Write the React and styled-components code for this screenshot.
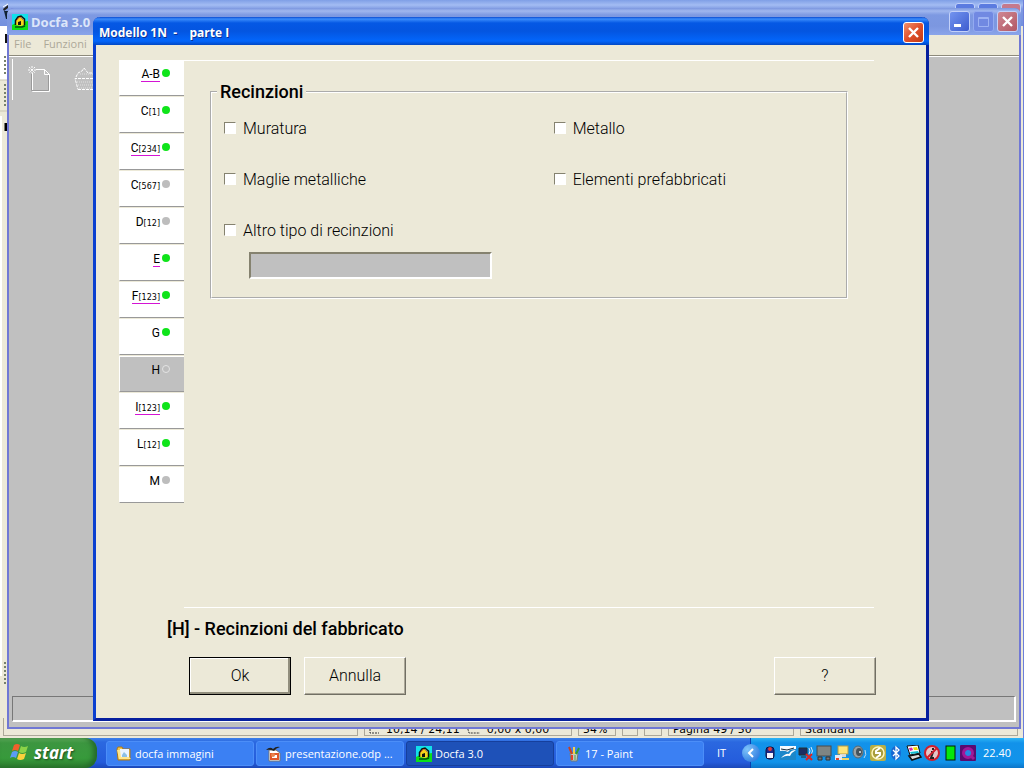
import { useState } from "react";
import styled, { createGlobalStyle } from "styled-components";

const tabs = [
    { id: "A-B", letter: "A-B", done: true, link: true },
    { id: "C1", letter: "C", sub: "[1]", done: true },
    { id: "C234", letter: "C", sub: "[234]", done: true, link: true },
    { id: "C567", letter: "C", sub: "[567]" },
    { id: "D12", letter: "D", sub: "[12]" },
    { id: "E", letter: "E", done: true, link: true },
    { id: "F123", letter: "F", sub: "[123]", done: true, link: true },
    { id: "G", letter: "G", done: true },
    { id: "H", letter: "H" },
    { id: "I123", letter: "I", sub: "[123]", done: true, link: true },
    { id: "L12", letter: "L", sub: "[12]", done: true },
    { id: "M", letter: "M" },
];

export default function App() {
    const [current, setCurrent] = useState("H");

    return (
        <Desktop>
            <GlobalStyle />
            <Workspace>
                <Office />
                <Docfa />
                <Dialog>
                    <DialogTitle>
                        <span>Modello 1N &nbsp;- &nbsp;&nbsp; parte I</span>
                        <CloseButton type="button" aria-label="Chiudi"><Cross /></CloseButton>
                    </DialogTitle>
                    <DialogForm onSubmit={(e) => e.preventDefault()}>
                        <Upper>
                            <Tabs>
                                {tabs.map((t) => (
                                    <Tab key={t.id} type="button" $active={t.id === current} onClick={() => setCurrent(t.id)}>
                                        <TabText $link={t.link}>
                                            {t.letter}{t.sub && <small>{t.sub}</small>}
                                        </TabText>
                                        <Dot $done={t.done} $active={t.id === current} />
                                    </Tab>
                                ))}
                            </Tabs>
                            <Panel>
                                <Group>
                                    <legend>Recinzioni</legend>
                                    <Options>
                                        <Option><Check type="checkbox" />Muratura</Option>
                                        <Option><Check type="checkbox" />Metallo</Option>
                                        <Option><Check type="checkbox" />Maglie metalliche</Option>
                                        <Option><Check type="checkbox" />Elementi prefabbricati</Option>
                                        <Option><Check type="checkbox" />Altro tipo di recinzioni</Option>
                                    </Options>
                                    <OtherText type="text" aria-label="Altro tipo di recinzioni" disabled />
                                </Group>
                            </Panel>
                        </Upper>
                        <Heading>[H] - Recinzioni del fabbricato</Heading>
                        <Buttons>
                            <FormButton type="submit" $default>Ok</FormButton>
                            <FormButton type="button">Annulla</FormButton>
                            <Spacer />
                            <FormButton type="button">?</FormButton>
                        </Buttons>
                    </DialogForm>
                </Dialog>
            </Workspace>
            <Taskbar />
        </Desktop>
    );
}

function Office() {
    return (
        <OfficeWindow>
            <OfficeTitle>
                <svg width="8" height="26" viewBox="0 0 8 26">
                    <path d="M3 9 L8 5 V8 L4 11z" fill="#222" />
                    <path d="M4 11 H8 V19 H6z" fill="#123" />
                    <path d="M3 7 L8 4" stroke="#fff" />
                </svg>
                <OfficeCorner><i /><i /><b /></OfficeCorner>
            </OfficeTitle>
            <OfficeEdge>
                <svg width="7" height="660" viewBox="0 0 7 660">
                    <rect width="7" height="54" fill="#fff" />
                    <path d="M6 8V17" stroke="#111" strokeWidth="2" />
                    <path d="M5 30V50M5 58V80M5 636V660" stroke="#77806c" strokeWidth="2" strokeDasharray="2 2" />
                    <path d="M0 54H7M0 85H7" stroke="#c9c5b2" />
                    <path d="M1 90V650" stroke="#fff" strokeWidth="2" />
                    <path d="M6 97V105" stroke="#000" strokeWidth="3" />
                </svg>
            </OfficeEdge>
            <OfficeStatus>
                <StatusCell $width={355} />
                <StatusCell $width={208}>
                    <svg width="11" height="10" viewBox="0 0 11 10"><path d="M1 1V8H10" fill="none" stroke="#333" strokeDasharray="2 1" /></svg>
                    <span>10,14 / 24,11</span>
                    <svg width="15" height="10" viewBox="0 0 15 10"><path d="M1 1L3 8H14" fill="none" stroke="#333" strokeDasharray="2 1" /></svg>
                    <span>0,00 x 0,00</span>
                </StatusCell>
                <StatusCell $width={38}>54%</StatusCell>
                <StatusCell $width={16} />
                <StatusCell $width={18} />
                <StatusCell $width={126}>Pagina 49 / 50</StatusCell>
                <StatusCell $grow>Standard</StatusCell>
            </OfficeStatus>
        </OfficeWindow>
    );
}

function Docfa() {
    return (
        <DocfaWindow>
            <DocfaTitle>
                <HouseIcon />
                <strong>Docfa 3.0</strong>
                <CaptionButton type="button" aria-label="Riduci a icona">
                    <svg width="19" height="19" viewBox="0 0 19 19"><path d="M4 13.5H11" stroke="#fff" strokeWidth="3" /></svg>
                </CaptionButton>
                <CaptionButton type="button" aria-label="Ingrandisci" $dim>
                    <svg width="19" height="19" viewBox="0 0 19 19"><path d="M4.500 5.500H14.500V14.500H4.500zM4.500 6.500H14.500" fill="none" stroke="#9db2f3" /></svg>
                </CaptionButton>
                <CaptionButton type="button" aria-label="Chiudi" $red><Cross /></CaptionButton>
            </DocfaTitle>
            <Menu>
                <a href="#file">File</a>
                <a href="#funzioni">Funzioni</a>
            </Menu>
            <DocfaBody>
                <Toolbar>
                    <ToolButton type="button" aria-label="Nuovo" disabled>
                        <svg width="26" height="30" viewBox="0 0 26 30" fill="none">
                            <path d="M6.500 9V27.500H23.500V10.500L18.500 5.500H10M18.500 5.500V10.500H23.500" stroke="#fff" />
                            <path d="M5.500 10V26.500H22.500V11" stroke="#9a9a9a" />
                            <path d="M6 2V9M2 6H10M3 3L9 9M9 3L3 9" stroke="#fff" strokeDasharray="2 1" />
                        </svg>
                    </ToolButton>
                    <ToolButton type="button" aria-label="Apri" disabled>
                        <svg width="26" height="30" viewBox="0 0 26 30" fill="none">
                            <path d="M6 25.500H24V14.500H3L6 25.500M4 13L6 9L10 7L12 4L16 9H24" stroke="#fff" strokeDasharray="3 1" />
                            <path d="M7 24H24M5 18H23M6 21H24M8 10H22" stroke="#e0e0e0" strokeDasharray="1 1" />
                        </svg>
                    </ToolButton>
                </Toolbar>
                <DocfaStatus />
            </DocfaBody>
        </DocfaWindow>
    );
}

function Taskbar() {
    return (
        <Bar>
            <Start type="button">
                <svg width="20" height="20" viewBox="0 0 20 20">
                    <path d="M4 3Q7 1 10 3L8 9Q5 7 2 9z" fill="#f0602c" />
                    <path d="M11 4Q14 6 18 4L16 10Q12 12 9 10z" fill="#8bd348" />
                    <path d="M2 10Q5 8 8 10L6 16Q3 14 0 16z" fill="#5c9cf5" />
                    <path d="M9 11Q12 13 16 11L14 17Q10 19 7 17z" fill="#fbd13c" />
                </svg>
                start
            </Start>
            <Tasks>
                <Task type="button"><FolderIcon />docfa immagini</Task>
                <Task type="button"><ImpressIcon />presentazione.odp ...</Task>
                <Task type="button" $pressed><HouseIcon />Docfa 3.0</Task>
                <Task type="button"><PaintIcon />17 - Paint</Task>
            </Tasks>
            <Lang>IT</Lang>
            <Tray>
                <Expand type="button" aria-label="Mostra icone nascoste">
                    <svg width="18" height="18" viewBox="0 0 18 18"><path d="M11 5L7 9L11 13" fill="none" stroke="#fff" strokeWidth="2" /></svg>
                </Expand>
                <TrayIcons />
                <Clock>22.40</Clock>
            </Tray>
        </Bar>
    );
}

function Cross() {
    return (
        <svg width="19" height="19" viewBox="0 0 19 19">
            <path d="M5 5L14 14M14 5L5 14" stroke="#fff" strokeWidth="2.400" />
        </svg>
    );
}

function HouseIcon() {
    return (
        <svg width="16" height="16" viewBox="0 0 16 16">
            <rect width="16" height="16" fill="#12e0ea" />
            <path d="M0 11L4 9L16 7V16H0z" fill="#0be018" />
            <path d="M4 6L8 3L12 6V11L9 12L4 11z" fill="#f7d51c" />
            <path d="M3.500 11V6.500L6 3L9 2L12.500 5V11.500" fill="none" stroke="#111" strokeWidth="1.500" />
            <path d="M5 6L7 3.500H9L11 6" fill="none" stroke="#e8641a" />
            <path d="M6 11V8L9 7V11z" fill="#111" />
            <path d="M3 13H10L13 12" stroke="#08500d" strokeWidth="1.500" fill="none" />
        </svg>
    );
}

function FolderIcon() {
    return (
        <svg width="16" height="16" viewBox="0 0 16 16">
            <path d="M1 3L2 1H6L7 3H14V14H2z" fill="#f3c64c" stroke="#a9761a" />
            <path d="M4 3H13V11H4z" fill="#e9f4ff" />
            <path d="M6 9L8 6L11 9V11H6z" fill="#8cc0e4" />
            <path d="M1 4L3 13H15L13 11H5L4 4z" fill="#ffe78d" />
        </svg>
    );
}

function ImpressIcon() {
    return (
        <svg width="16" height="16" viewBox="0 0 16 16">
            <path d="M3 4H10L14 7V15H3z" fill="#fff" stroke="#777" />
            <path d="M0 4Q4 0 7 3Q10 0 14 1Q10 2 8 5Q4 3 0 4z" fill="#222" />
            <path d="M5 8H12V13H5z" fill="#fff" stroke="#e0582a" strokeWidth="2" />
            <circle cx="7" cy="9" r="2" fill="#e9854c" />
        </svg>
    );
}

function PaintIcon() {
    return (
        <svg width="16" height="16" viewBox="0 0 16 16">
            <path d="M4 7H12L11 15H5z" fill="#c3c8c3" stroke="#707a74" />
            <path d="M6 8L3 1" stroke="#c84124" strokeWidth="2" />
            <path d="M8 8V1" stroke="#f2d04c" strokeWidth="2" />
            <path d="M10 8L13 2" stroke="#2e9c36" strokeWidth="2" />
            <path d="M6 9V14" stroke="#e5402a" strokeWidth="2" />
            <path d="M9 9V14" stroke="#4aa848" />
        </svg>
    );
}

function TrayIcons() {
    return (
        <>
            <TrayIcon viewBox="0 0 16 16">
                <rect x="4" y="2" width="8" height="12" rx="3" fill="#1b2a8c" stroke="#10143c" />
                <path d="M5 8H11V13H5z" fill="#f4f4ff" />
                <circle cx="8" cy="4" r="2" fill="#e03a3a" />
            </TrayIcon>
            <TrayIcon viewBox="0 0 16 16">
                <rect y="1" width="16" height="14" fill="#1b87c9" />
                <path d="M0 1H16V4Q9 4 8 7Q4 5 0 6z" fill="#f6fbff" />
                <path d="M1 13Q6 8 9 9Q11 5 16 5Q12 7 10 11Q6 10 1 13z" fill="#fff" />
                <path d="M1 4L7 5L14 3" stroke="#172838" fill="none" />
            </TrayIcon>
            <TrayIcon viewBox="0 0 16 16">
                <path d="M1 3H9V10H1zM3 12H8" fill="#1c2d62" stroke="#233" />
                <path d="M11 3Q13 6 11 9M13 2Q16 6 13 10" fill="none" stroke="#d8e8f8" />
                <path d="M8 9L14 15M14 9L8 15" stroke="#dc2424" strokeWidth="2" />
            </TrayIcon>
            <TrayIcon viewBox="0 0 16 16">
                <rect x="1" y="1" width="14" height="10" fill="#7f8583" stroke="#4b4b4b" />
                <path d="M2 12H6V15H2zM10 12H14V15H10z" fill="#777" stroke="#333" />
            </TrayIcon>
            <TrayIcon viewBox="0 0 16 16">
                <rect x="4" y="1" width="10" height="8" fill="#ffe579" stroke="#b69a45" />
                <path d="M6 9H12V12H6z" fill="#d4d8d8" />
                <path d="M1 10H8V15H1z" fill="#e3e8f4" />
                <path d="M2 13H5V15H2z" fill="#e4442a" />
                <path d="M8 13H15V15H8z" fill="#f0d468" />
            </TrayIcon>
            <TrayIcon viewBox="0 0 16 16">
                <ellipse cx="6" cy="7" rx="5" ry="6" fill="#9ba2a5" stroke="#58666d" />
                <ellipse cx="7" cy="7" rx="3" ry="4" fill="#45525b" />
                <circle cx="8" cy="7" r="1" fill="#e5e9eb" />
                <path d="M12 13Q15 10 13 5" fill="none" stroke="#bdd9ef" />
            </TrayIcon>
            <TrayIcon viewBox="0 0 16 16">
                <rect x="0" y="0" width="16" height="16" rx="2" fill="#b9ae44" />
                <circle cx="8" cy="8" r="6" fill="#a89d3c" stroke="#fff6bb" strokeWidth="1.500" />
                <path d="M10 3L6 6L6 8L10 8L10 10L6 13" fill="none" stroke="#fff" strokeWidth="2" />
            </TrayIcon>
            <TrayIcon viewBox="0 0 16 16">
                <ellipse cx="8" cy="8" rx="5" ry="7" fill="#1767d2" />
                <path d="M5 5L11 11L8 14V2L11 5L5 11" fill="none" stroke="#fff" strokeWidth="1.300" />
            </TrayIcon>
            <TrayIcon viewBox="0 0 16 16">
                <path d="M1 1L12 0L14 8L4 10z" fill="#fff" stroke="#111" />
                <path d="M3 3L6 2.500L7 5L4 6z" fill="#e024a7" />
                <path d="M7 2.500L11 2L12 5L8 5z" fill="#f5dc00" />
                <path d="M4 7L12 6L13 8L5 9z" fill="#13bfd4" />
                <path d="M3 11L13 9L15 12L6 15z" fill="#ddd" stroke="#111" strokeWidth="1.500" />
            </TrayIcon>
            <TrayIcon viewBox="0 0 16 16">
                <circle cx="8" cy="8" r="7" fill="#e5c5c8" stroke="#d01f2c" strokeWidth="2" />
                <path d="M9 3V5M7 7H9L7 13H10" stroke="#222" strokeWidth="2" fill="none" />
                <path d="M3 13L13 3" stroke="#d01f2c" strokeWidth="2" />
            </TrayIcon>
            <TrayIcon viewBox="0 0 16 16">
                <rect x="4" y="1" width="9" height="14" fill="#05e80b" stroke="#071c07" />
            </TrayIcon>
            <TrayIcon viewBox="0 0 16 16">
                <rect width="16" height="16" rx="1" fill="#5a0a70" />
                <circle cx="8" cy="8" r="4.500" fill="#2487e4" stroke="#a01898" strokeWidth="3" />
                <path d="M11 11L14 14" stroke="#a01898" strokeWidth="3" />
            </TrayIcon>
        </>
    );
}

const GlobalStyle = createGlobalStyle`
    * {
        box-sizing: border-box;
    }
    body {
        margin: 0;
        overflow: hidden;
        font-family: "Open Sans", sans-serif;
        font-size: 11px;
    }
    button, input {
        font-family: inherit;
        margin: 0;
    }
    svg {
        display: block;
        flex-shrink: 0;
    }
`
const Desktop = styled.div`
    height: 100vh;
    display: flex;
    flex-direction: column;
`
const Workspace = styled.main`
    flex: 1;
    position: relative;
    overflow: hidden;
`
const OfficeWindow = styled.div`
    position: absolute;
    inset: 0;
    display: flex;
    flex-direction: column;
    background-color: #ece9d8;
    border-right: 1px solid #6d7fd9;
`
const OfficeTitle = styled.div`
    height: 26px;
    display: flex;
    justify-content: space-between;
    background: linear-gradient(#7f9fe6, #a3bcf3 5px, #7f9ae2 9px, #7390de);
`
const OfficeCorner = styled.div`
    display: flex;
    gap: 3px;
    padding: 3px 2px 0 0;
    i, b {
        width: 20px;
        height: 20px;
        border: 1px solid #c0d0fa;
        border-radius: 3px;
        background-color: #5b7be0;
    }
    b {
        background-color: #c5798c;
    }
`
const OfficeEdge = styled.div`
    flex: 1;
    min-height: 0;
    overflow: hidden;
`
const OfficeStatus = styled.div`
    height: 20px;
    display: flex;
    gap: 6px;
    padding: 0 5px 2px 3px;
    background-color: #ece9d8;
`
const StatusCell = styled.div`
    width: ${(p) => (p.$grow ? "auto" : `${p.$width}px`)};
    flex: ${(p) => (p.$grow ? "1" : "none")};
    display: flex;
    align-items: center;
    gap: 6px;
    padding: 6px 0 0 4px;
    border: 1px solid #aca899;
    border-top: none;
    font-family: "DejaVu Sans", sans-serif;
    font-size: 11px;
    line-height: 12px;
    white-space: nowrap;
    color: #000;
`
const DocfaWindow = styled.section`
    position: absolute;
    inset: 8px 3px 9px 7px;
    display: flex;
    flex-direction: column;
    padding: 0 2px 2px;
    background-color: #7078d4;
    border-radius: 7px 7px 0 0;
    overflow: hidden;
`
const DocfaTitle = styled.header`
    height: 27px;
    flex-shrink: 0;
    display: flex;
    align-items: center;
    gap: 3px;
    margin: 0 -2px;
    padding: 0 3px 0 5px;
    background: linear-gradient(#7b96df, #a0b7ee 3px, #7d99e2 7px, #7c97e0 18px, #8aa4ea);
    color: #dce6fa;
    font-size: 13px;
    strong {
        flex: 1;
        font-family: "Noto Sans", sans-serif;
    }
`
const CaptionButton = styled.button`
    width: 21px;
    height: 21px;
    padding: 0;
    border: 1px solid ${(p) => (p.$dim ? "#93aaf0" : "#c3d1f9")};
    border-radius: 3px;
    background: ${(p) => (p.$red ? "linear-gradient(135deg, #cf8793, #b25864)" : p.$dim ? "#7189e2" : "linear-gradient(135deg, #7394ef, #3d5ccf)")};
`
const Menu = styled.nav`
    height: 21px;
    flex-shrink: 0;
    display: flex;
    align-items: center;
    gap: 12px;
    padding: 0 5px 3px;
    background-color: #ece9d8;
    border-bottom: 1px solid #8d8a7c;
    a {
        font-size: 11px;
        color: #aca899;
        text-decoration: none;
    }
`
const DocfaBody = styled.div`
    flex: 1;
    display: flex;
    flex-direction: column;
    justify-content: space-between;
    background-color: #c0c0c0;
    border-top: 1px solid #fff;
    padding: 2px 3px 5px;
`
const Toolbar = styled.div`
    display: flex;
    gap: 20px;
    height: 41px;
    padding: 5px 0 0 13px;
    border-left: 1px solid #fff;
`
const ToolButton = styled.button`
    width: 26px;
    height: 30px;
    padding: 0;
    border: none;
    background: none;
`
const DocfaStatus = styled.div`
    height: 26px;
    border: 1px solid #777;
    border-right: 2px solid #fff;
    border-bottom: 2px solid #fff;
`
const Dialog = styled.section`
    position: absolute;
    inset: 17px 95px 17px 93px;
    display: flex;
    flex-direction: column;
    background-color: #ece9d8;
    border: 3px solid #0a3fd0;
    border-top: none;
    border-right-color: #061f9e;
    border-bottom-color: #061f9e;
    border-radius: 7px 7px 0 0;
`
const DialogTitle = styled.header`
    height: 28px;
    flex-shrink: 0;
    display: flex;
    align-items: center;
    justify-content: space-between;
    margin: 0 -3px;
    padding: 2px 5px 0 6px;
    border-radius: 7px 7px 0 0;
    background: linear-gradient(#0a4bd0, #3b8cfb 2px, #0558e4 6px, #0455e0 14px, #0366fb 24px, #0248c4);
    color: #fff;
    font-size: 12px;
    font-weight: 700;
    text-shadow: 1px 1px #0b3195;
`
const CloseButton = styled.button`
    width: 21px;
    height: 21px;
    padding: 0;
    border: 1px solid #fff;
    border-radius: 3px;
    background: linear-gradient(135deg, #f0906c, #e0502c 50%, #c23a14);
`
const DialogForm = styled.form`
    flex: 1;
    display: flex;
    flex-direction: column;
    padding: 15px 50px 23px 23px;
    font-family: Roboto, sans-serif;
`
const Upper = styled.div`
    flex: 1;
    display: flex;
    align-items: stretch;
    padding-right: 2px;
`
const Tabs = styled.nav`
    width: 65px;
    display: flex;
    flex-direction: column;
    gap: 1px;
`
const Tab = styled.button`
    width: 100%;
    height: 36px;
    display: flex;
    align-items: flex-start;
    justify-content: flex-end;
    gap: 2px;
    padding: 7px 14px 0 0;
    border: 1px solid #fff;
    border-right: none;
    border-bottom-color: #999;
    background-color: ${(p) => (p.$active ? "#c0c0c0" : "#fff")};
    color: #000;
`
const TabText = styled.span`
    height: 14px;
    font-size: 12px;
    line-height: 13px;
    border-bottom: 1px solid ${(p) => (p.$link ? "#d414d4" : "transparent")};
    small {
        font-family: "DejaVu Sans", sans-serif;
        font-size: 8px;
        line-height: 8px;
    }
`
const Dot = styled.span`
    width: 8px;
    height: 8px;
    margin-top: 1px;
    border-radius: 50%;
    border: 1px solid ${(p) => (p.$active ? "#e4e4e4" : "transparent")};
    background: ${(p) => (p.$done ? "#0fe41a" : "#bdbdbd")} border-box;
`
const Panel = styled.div`
    flex: 1;
    padding: 21px 26px;
    border-top: 1px solid #fff;
    border-bottom: 1px solid #fff;
`
const Group = styled.fieldset`
    margin: 0;
    padding: 16px 0 18px 12px;
    border: 2px groove #fff;
    legend {
        margin-left: -7px;
        padding: 0 3px;
        font-size: 18px;
        line-height: 20px;
        font-weight: 500;
    }
`
const Options = styled.div`
    display: grid;
    grid-template-columns: 53% 47%;
    row-gap: 31px;
`
const Option = styled.label`
    display: flex;
    align-items: center;
    gap: 7px;
    height: 20px;
    font-size: 16px;
    font-weight: 300;
    white-space: nowrap;
`
const Check = styled.input`
    appearance: none;
    width: 12px;
    height: 12px;
    background-color: #fff;
    border: 1px solid #fff;
    border-top-color: #85826f;
    border-left-color: #85826f;
    &:checked {
        background-color: #333;
    }
`
const OtherText = styled.input`
    display: block;
    width: 243px;
    height: 27px;
    margin: 12px 0 0 25px;
    background-color: #c0c0c0;
    border: 2px solid #fff;
    border-top-color: #85826f;
    border-left-color: #85826f;
`
const Heading = styled.h1`
    margin: 11px 0 18px 48px;
    font-size: 18px;
    line-height: 20px;
    font-weight: 500;
`
const Buttons = styled.div`
    display: flex;
    gap: 13px;
    padding-left: 70px;
`
const Spacer = styled.span`
    flex: 1;
`
const FormButton = styled.button`
    width: 102px;
    height: 38px;
    padding: 0 0 2px;
    background-color: #ece9d8;
    border: 1px solid;
    border-color: ${(p) => (p.$default ? "#000" : "#fff #716f64 #716f64 #fff")};
    box-shadow: ${(p) => (p.$default ? "inset -2px -2px #918e7d, inset 1px 1px #fff" : "inset -1px -1px #aca899")};
    font-size: 16px;
    font-weight: 300;
    color: #000;
`
const Bar = styled.footer`
    height: 30px;
    flex-shrink: 0;
    display: flex;
    background: linear-gradient(#3c80ea, #2b68e0 4px, #245cdc 24px, #1b48b8);
    color: #fff;
`
const Start = styled.button`
    width: 97px;
    display: flex;
    align-items: center;
    gap: 4px;
    padding: 0 0 2px 10px;
    border: none;
    border-radius: 0 12px 12px 0;
    background: linear-gradient(#5eac5c, #3c9640 5px, #379a3b 20px, #2b7c2e);
    box-shadow: inset -4px -1px 5px #256b2a;
    color: #fff;
    font-size: 17px;
    font-weight: 700;
    font-style: italic;
    text-shadow: 1px 1px 2px #1d4a1e;
`
const Tasks = styled.div`
    flex: 1;
    display: flex;
    gap: 2px;
    padding: 3px 0 2px 9px;
`
const Task = styled.button`
    flex: 1;
    max-width: 148px;
    display: flex;
    align-items: center;
    gap: 3px;
    padding: 0 9px;
    border: 1px solid ${(p) => (p.$pressed ? "#163f9c" : "#4c8ef8")};
    border-radius: 3px;
    background-color: ${(p) => (p.$pressed ? "#1e51b8" : "#3b80f3")};
    color: #fff;
    font-size: 11px;
    white-space: nowrap;
`
const Lang = styled.span`
    width: 46px;
    padding-left: 13px;
    line-height: 30px;
`
const Tray = styled.div`
    display: flex;
    align-items: center;
    gap: 2px;
    padding-right: 13px;
    background: linear-gradient(#2cb4f5, #1292ea 5px, #1193ea 24px, #0c75c8);
    border-left: 1px solid #0b3eae;
    line-height: 30px;
`
const Expand = styled.button`
    width: 18px;
    height: 18px;
    margin-left: -9px;
    padding: 0;
    border: none;
    border-radius: 50%;
    background: radial-gradient(circle at 30% 30%, #7fc4fb, #1b6ad8);
`
const TrayIcon = styled.svg`
    width: 16px;
    height: 16px;
`
const Clock = styled.time`
    margin-left: 5px;
`
